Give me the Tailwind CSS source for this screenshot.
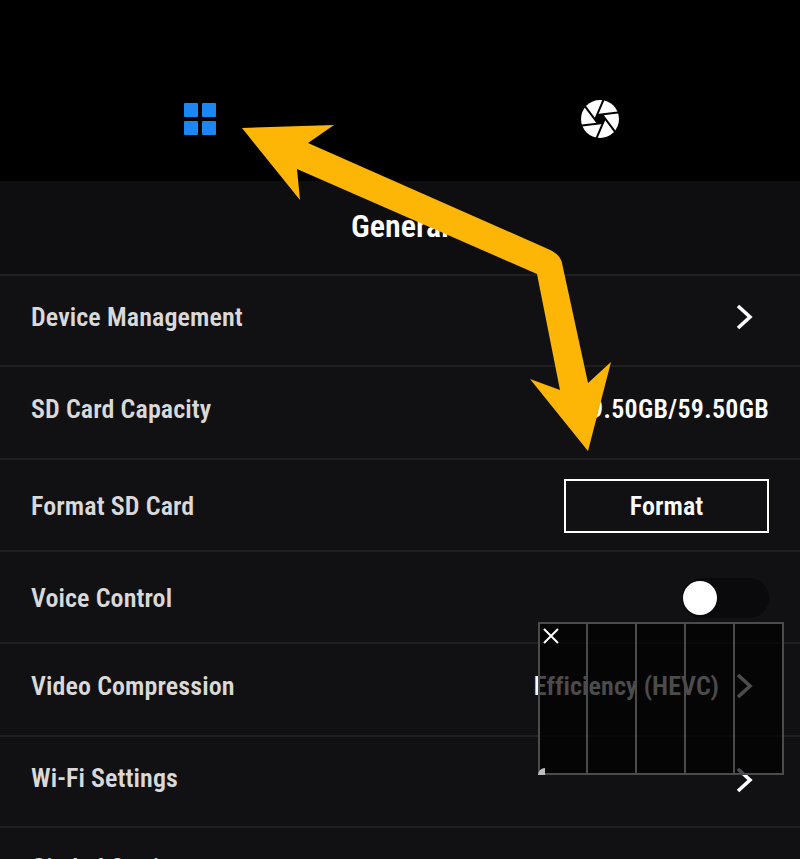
<!DOCTYPE html>
<html lang="en">
  <head>
    <meta charset="UTF-8" />
    <meta name="viewport" content="width=device-width, initial-scale=1.0" />
    <title>General Settings</title>
    <script src="https://cdn.jsdelivr.net/npm/@tailwindcss/browser@4"></script>
  </head>
  <body class="bg-[#111114] font-['Roboto',sans-serif] overflow-hidden">
    <div class="relative w-[800px] h-[859px] overflow-hidden">
      <!-- tabs -->
      <div class="h-[181px] bg-black grid grid-cols-2 pt-[101px]">
        <div class="flex justify-center">
          <svg width="34" height="34" viewBox="0 0 34 34" fill="#1a87f5">
            <rect x="1" y="2" width="14" height="14" rx="1" />
            <rect x="19" y="2" width="14" height="14" rx="1" />
            <rect x="1" y="20" width="14" height="14" rx="1" />
            <rect x="19" y="20" width="14" height="14" rx="1" />
          </svg>
        </div>
        <div class="flex justify-center">
          <svg width="40" height="40" viewBox="0 0 40 40" class="-mt-[2px]">
            <circle cx="20" cy="20" r="19" fill="#fff" />
            <g transform="translate(20 20)" stroke="#000" stroke-width="2" fill="#000">
              <line x1="-21" y1="4.3" x2="2.5" y2="4.3" transform="rotate(-7)" />
              <line x1="-21" y1="4.3" x2="2.5" y2="4.3" transform="rotate(53)" />
              <line x1="-21" y1="4.3" x2="2.5" y2="4.3" transform="rotate(113)" />
              <line x1="-21" y1="4.3" x2="2.5" y2="4.3" transform="rotate(173)" />
              <line x1="-21" y1="4.3" x2="2.5" y2="4.3" transform="rotate(233)" />
              <line x1="-21" y1="4.3" x2="2.5" y2="4.3" transform="rotate(293)" />
              <polygon points="5,0 2.5,4.3 -2.5,4.3 -5,0 -2.5,-4.3 2.5,-4.3" transform="rotate(-7)" stroke="none" />
            </g>
          </svg>
        </div>
      </div>

      <h1 class="h-[93px] bg-[#0e0e10] pb-[3px] flex items-center justify-center text-[32px] font-semibold text-white [font-stretch:75%]">General</h1>

      <!-- rows -->
      <div class="text-[26px] font-semibold text-[#d9d9d9] tracking-[0.1px] [font-stretch:75%]">
        <div class="h-[91px] border-t-2 border-[#1f1f22] pl-[31px] pr-[47px] pb-[7px] flex items-center justify-between">
          <span>Device Management</span>
          <svg width="17" height="26" viewBox="0 0 17 26" fill="none" stroke="#fff" stroke-width="3.6"><path d="M2 2l12 11L2 24" /></svg>
        </div>
        <div class="h-[93px] border-t-2 border-[#1f1f22] px-[31px] pb-[7px] flex items-center justify-between">
          <span>SD Card Capacity</span>
          <span class="text-white tracking-[0.3px]">59.50GB/59.50GB</span>
        </div>
        <div class="h-[92px] border-t-2 border-[#1f1f22] px-[31px] pt-[2px] flex items-center justify-between">
          <span>Format SD Card</span>
          <button class="w-[205px] h-[54px] border-2 border-white text-white font-semibold">Format</button>
        </div>
        <div class="h-[92px] border-t-2 border-[#1f1f22] px-[31px] pt-[2px] flex items-center justify-between">
          <span>Voice Control</span>
          <div class="w-[87px] h-[40px] rounded-full bg-[#0a0a0c] flex items-center pl-[1px]">
            <div class="w-[34px] h-[34px] rounded-full bg-white"></div>
          </div>
        </div>
        <div class="h-[93px] border-t-2 border-[#1f1f22] pl-[31px] pr-[47px] pb-[7px] flex items-center justify-between">
          <span>Video Compression</span>
          <span class="flex items-center gap-[17px] text-white">
            <span>Efficiency (HEVC)</span>
            <svg width="17" height="26" viewBox="0 0 17 26" fill="none" stroke="#fff" stroke-width="3.6"><path d="M2 2l12 11L2 24" /></svg>
          </span>
        </div>
        <div class="h-[91px] border-t-2 border-[#1f1f22] pl-[31px] pr-[47px] pb-[7px] flex items-center justify-between">
          <span>Wi-Fi Settings</span>
          <svg width="17" height="26" viewBox="0 0 17 26" fill="none" stroke="#fff" stroke-width="3.6" class="mt-[3px]"><path d="M2 2l12 11L2 24" /></svg>
        </div>
        <div class="h-[92px] border-t-2 border-[#1f1f22] pl-[31px] pt-[21px]">
          <span>Gimbal Settings</span>
        </div>
      </div>

      <!-- floating overlay window -->
      <div class="absolute left-[538px] top-[622px] w-[246px] h-[153px] bg-black/70 border-2 border-[#4b4b4d] grid grid-cols-[48px_49px_49px_49px_1fr] divide-x-2 divide-[#4b4b4d]">
        <div></div><div></div><div></div><div></div><div></div>
      </div>
      <svg class="absolute left-[542px] top-[627px]" width="18" height="18" viewBox="0 0 18 18" stroke="#fff" stroke-width="2"><path d="M2 2l14 14M16 2L2 16" /></svg>
      <div class="absolute left-[538px] top-[768px] w-[7px] h-[7px] bg-[#bdbdbd] rounded-tl-[7px]"></div>

      <!-- annotation arrow -->
      <svg class="absolute left-0 top-0" width="800" height="859" viewBox="0 0 800 859">
        <path fill="#fdb606" d="M242 128L334 125L308 143L548 249Q560 254 562 263L588 383L611 362L588 451L530 379L560 390L537 274L297 169L300 200Z" />
      </svg>
    </div>
  </body>
</html>
